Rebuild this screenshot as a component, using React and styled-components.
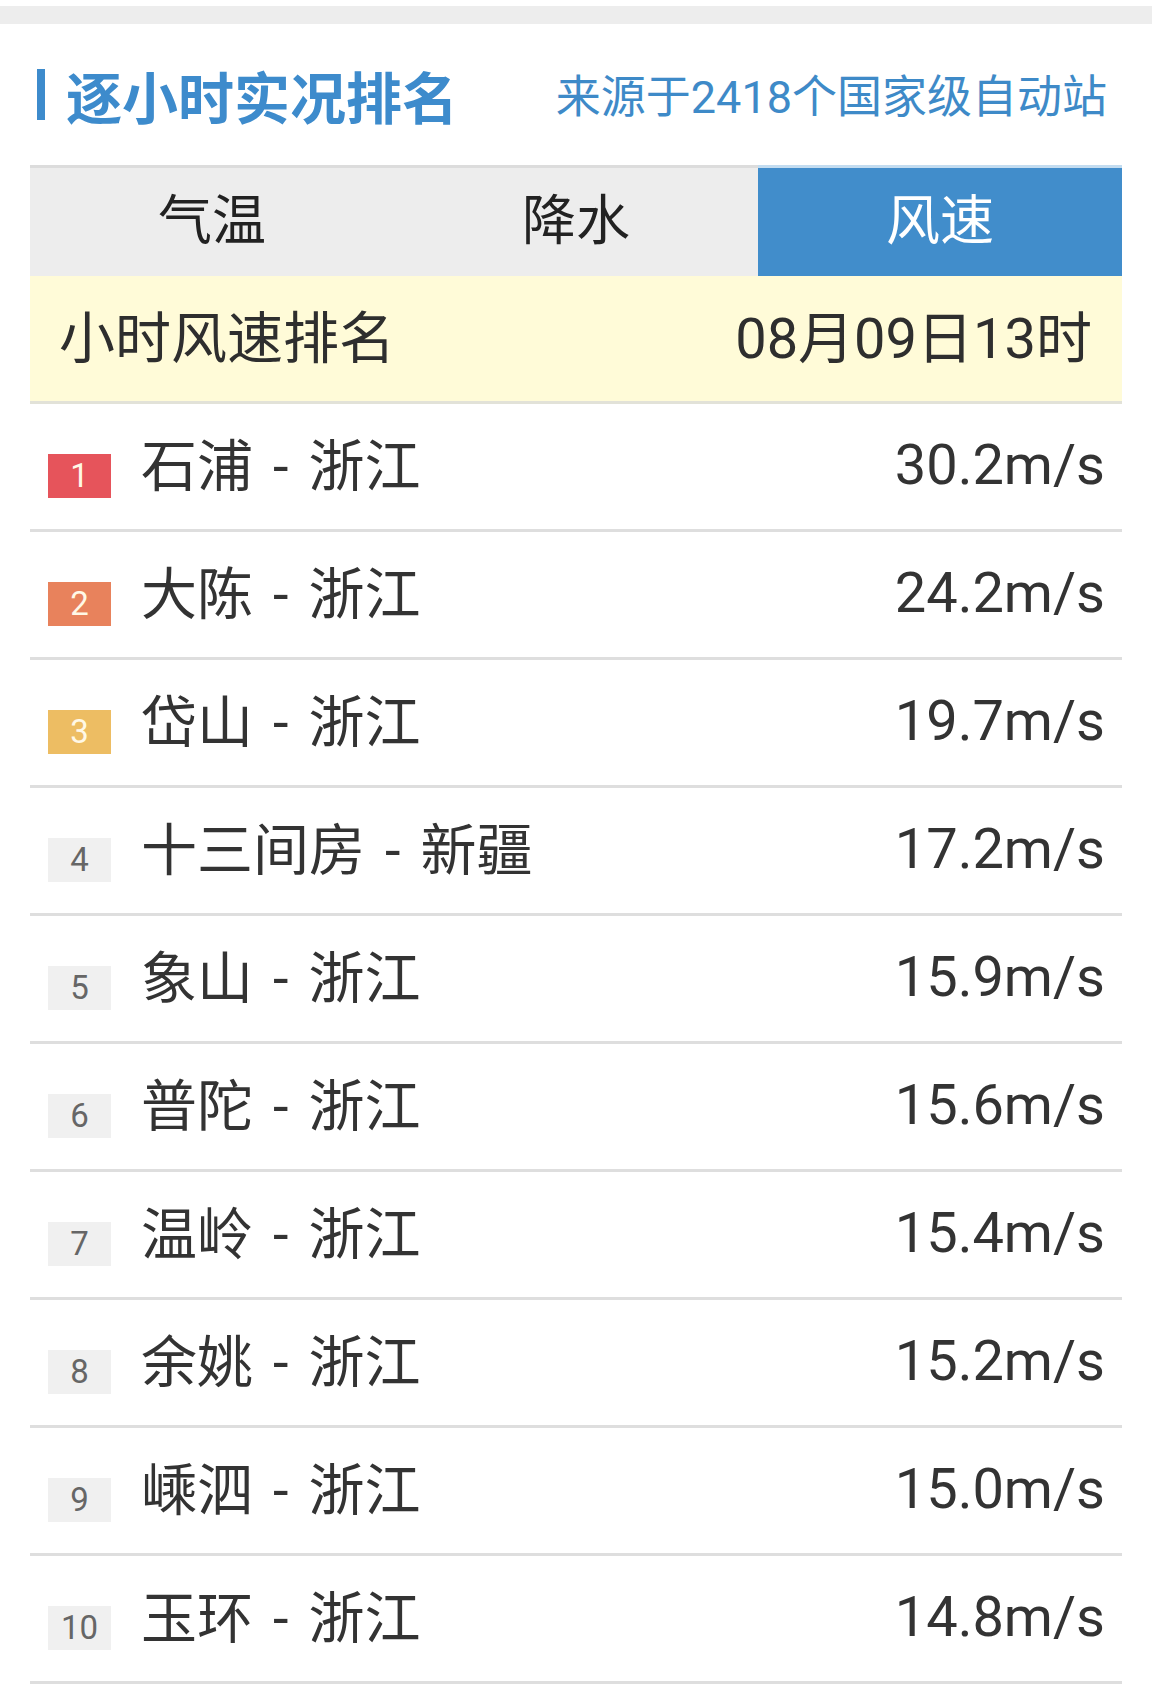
import React from "react";
import styled, { createGlobalStyle } from "styled-components";

const GlobalStyle = createGlobalStyle`
  html, body {
    margin: 0;
    padding: 0;
    background: #ffffff;
  }
  body {
    font-family: Roboto, "Noto Sans CJK SC", sans-serif;
    color: #333333;
  }
`;

const RANKS = [
  { name: "石浦", province: "浙江", value: "30.2m/s" },
  { name: "大陈", province: "浙江", value: "24.2m/s" },
  { name: "岱山", province: "浙江", value: "19.7m/s" },
  { name: "十三间房", province: "新疆", value: "17.2m/s" },
  { name: "象山", province: "浙江", value: "15.9m/s" },
  { name: "普陀", province: "浙江", value: "15.6m/s" },
  { name: "温岭", province: "浙江", value: "15.4m/s" },
  { name: "余姚", province: "浙江", value: "15.2m/s" },
  { name: "嵊泗", province: "浙江", value: "15.0m/s" },
  { name: "玉环", province: "浙江", value: "14.8m/s" }
];

const TABS = ["气温", "降水", "风速"];

const BADGE_COLORS = ["#e6545b", "#e8825c", "#edbd63"];

const Page = styled.div`
  width: 1152px;
  padding-top: 6px;
`;

const TopBand = styled.div`
  height: 18px;
  background: #ededed;
`;

const Header = styled.div`
  height: 141px;
  display: flex;
  align-items: center;
  justify-content: space-between;
  padding: 0 45px 0 37px;
`;

const Title = styled.h2`
  margin: 0;
  border-left: 8px solid #3d8bcc;
  padding-left: 21px;
  font-size: 56px;
  line-height: 51px;
  font-weight: 700;
  color: #3d8bcc;
  font-family: "Noto Sans CJK SC", sans-serif;
`;

const Source = styled.span`
  margin-top: 6px;
  font-size: 45px;
  line-height: 1;
  color: #3e8ac8;
`;

const Panel = styled.div`
  margin: 0 30px;
`;

const Tabs = styled.div`
  display: grid;
  grid-template-columns: repeat(3, 1fr);
`;

const Tab = styled.div`
  height: 108px;
  border-top: 3px solid ${p => (p.$active ? "#c3dcf0" : "#dcdcdc")};
  background: ${p => (p.$active ? "#418dcb" : "#ededed")};
  color: ${p => (p.$active ? "#ffffff" : "#222222")};
  display: flex;
  align-items: center;
  justify-content: center;
  font-size: 54px;
  line-height: 1;
`;

const SubHeader = styled.div`
  height: 125px;
  background: #fffbd8;
  border-bottom: 3px solid #e2e2d8;
  display: flex;
  align-items: center;
  justify-content: space-between;
  padding: 0 30px 0 29px;
  font-size: 56px;
  line-height: 1;
  color: #2e2e2e;
`;

const Row = styled.div`
  height: 125px;
  border-bottom: 3px solid #dedede;
  display: flex;
  align-items: center;
  padding: 0 17px 0 18px;
`;

const Badge = styled.span`
  width: 63px;
  height: 44px;
  margin-top: 18px;
  margin-right: 30px;
  flex-shrink: 0;
  display: flex;
  align-items: center;
  justify-content: center;
  font-size: 33px;
  background: ${p => BADGE_COLORS[p.$rank - 1] || "#f0f0f0"};
  color: ${p => (p.$rank <= 3 ? "#fff8e6" : "#666666")};
`;

const Name = styled.span`
  flex: 1;
  font-size: 56px;
  line-height: 1;
  color: #333333;
`;

const Dash = styled.span`
  margin: 0 20px;
`;

const Value = styled.span`
  margin-bottom: 4px;
  font-size: 56px;
  line-height: 1;
  color: #333333;
`;

const App = () => (
  <Page>
    <GlobalStyle />
    <TopBand />
    <Header>
      <Title>逐小时实况排名</Title>
      <Source>来源于2418个国家级自动站</Source>
    </Header>
    <Panel>
      <Tabs>
        {TABS.map(tab => (
          <Tab key={tab} $active={tab === "风速"}>
            {tab}
          </Tab>
        ))}
      </Tabs>
      <SubHeader>
        <span>小时风速排名</span>
        <span>08月09日13时</span>
      </SubHeader>
      {RANKS.map((item, i) => (
        <Row key={item.name}>
          <Badge $rank={i + 1}>{i + 1}</Badge>
          <Name>
            {item.name}
            <Dash>-</Dash>
            {item.province}
          </Name>
          <Value>{item.value}</Value>
        </Row>
      ))}
    </Panel>
  </Page>
);

export default App;
